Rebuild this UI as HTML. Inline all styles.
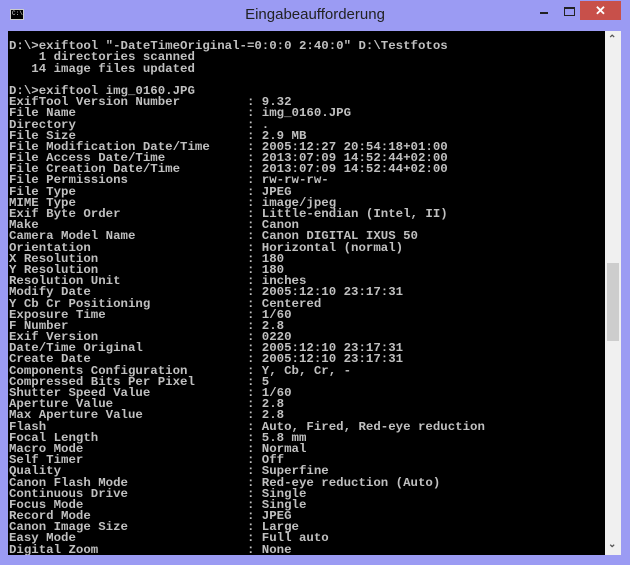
<!DOCTYPE html>
<html><head><meta charset="utf-8"><style>
*{margin:0;padding:0}
html,body{width:630px;height:565px;overflow:hidden;background:#9b9bf3}
.t{position:absolute;left:0;top:0;width:630px;height:31px}
.title{position:absolute;left:0;width:630px;top:6px;text-align:center;font:15px "Liberation Sans",sans-serif;color:#222}
.ico{position:absolute;left:10px;top:9px;width:12px;height:9px;background:#000;border:1px solid #ccc}
.ico:after{content:"C:\\";position:absolute;left:1px;top:0;font:6px "Liberation Mono",monospace;color:#ddd}
.min{position:absolute;left:540px;top:12px;width:8px;height:2px;background:#222}
.max{position:absolute;left:564px;top:7px;width:9px;height:6px;border:1px solid #222;border-top-width:2px}
.cls{position:absolute;left:580px;top:1px;width:41px;height:19px;background:#c8504a;color:#fff;font:bold 13px "Liberation Sans",sans-serif;text-align:center;line-height:19px}
.con{position:absolute;left:8px;top:31px;width:597px;height:524px;background:#000;overflow:hidden}
pre{position:absolute;left:1px;top:-1px;font:bold 12.4px/11.18px "Liberation Mono",monospace;color:#c0c0c0;letter-spacing:0}
.sb{position:absolute;left:605px;top:31px;width:16px;height:524px;background:#f0f0f0}
.th{position:absolute;left:2px;top:232px;width:12px;height:78px;background:#cdcdcd}
.ar{position:absolute;left:3px;font:bold 10px "Liberation Sans",sans-serif;color:#555}
</style></head><body>
<div class="t"><div class="ico"></div><div class="title">Eingabeaufforderung</div><div class="min"></div><div class="max"></div><div class="cls">✕</div></div>
<div class="con"><pre>

D:\>exiftool "-DateTimeOriginal-=0:0:0 2:40:0" D:\Testfotos
    1 directories scanned
   14 image files updated

D:\>exiftool img_0160.JPG
ExifTool Version Number         : 9.32
File Name                       : img_0160.JPG
Directory                       : .
File Size                       : 2.9 MB
File Modification Date/Time     : 2005:12:27 20:54:18+01:00
File Access Date/Time           : 2013:07:09 14:52:44+02:00
File Creation Date/Time         : 2013:07:09 14:52:44+02:00
File Permissions                : rw-rw-rw-
File Type                       : JPEG
MIME Type                       : image/jpeg
Exif Byte Order                 : Little-endian (Intel, II)
Make                            : Canon
Camera Model Name               : Canon DIGITAL IXUS 50
Orientation                     : Horizontal (normal)
X Resolution                    : 180
Y Resolution                    : 180
Resolution Unit                 : inches
Modify Date                     : 2005:12:10 23:17:31
Y Cb Cr Positioning             : Centered
Exposure Time                   : 1/60
F Number                        : 2.8
Exif Version                    : 0220
Date/Time Original              : 2005:12:10 23:17:31
Create Date                     : 2005:12:10 23:17:31
Components Configuration        : Y, Cb, Cr, -
Compressed Bits Per Pixel       : 5
Shutter Speed Value             : 1/60
Aperture Value                  : 2.8
Max Aperture Value              : 2.8
Flash                           : Auto, Fired, Red-eye reduction
Focal Length                    : 5.8 mm
Macro Mode                      : Normal
Self Timer                      : Off
Quality                         : Superfine
Canon Flash Mode                : Red-eye reduction (Auto)
Continuous Drive                : Single
Focus Mode                      : Single
Record Mode                     : JPEG
Canon Image Size                : Large
Easy Mode                       : Full auto
Digital Zoom                    : None
</pre></div>
<div class="sb"><div class="ar" style="top:3px">&#8963;</div><div class="th"></div><div class="ar" style="top:508px">&#8964;</div></div>
</body></html>
